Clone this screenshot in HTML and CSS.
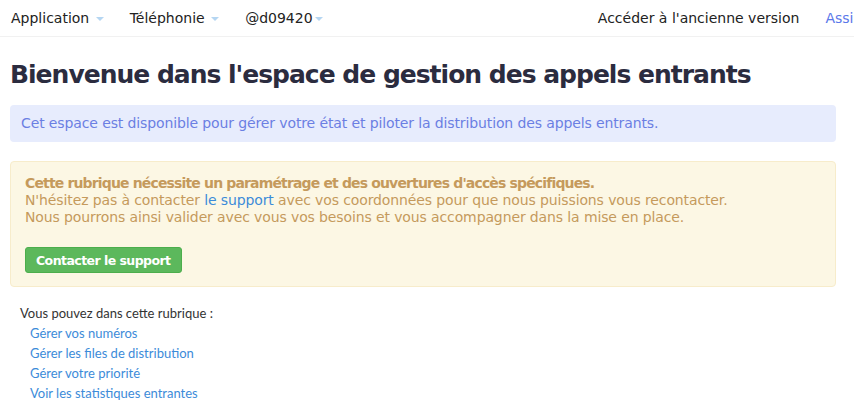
FILE: index.html
```html
<!DOCTYPE html>
<html lang="fr">
  <head>
    <meta charset="UTF-8" />
    <meta name="viewport" content="width=device-width, initial-scale=1.0" />
    <title>Appels entrants</title>
    <link rel="stylesheet" href="styles.css">
  </head>
  <body>
    <nav class="topbar">
      <ul class="menu">
        <li class="dropdown">Application <span class="caret"></span></li>
        <li class="dropdown">Téléphonie <span class="caret"></span></li>
        <li class="dropdown">@d09420<span class="caret"></span></li>
      </ul>
      <ul class="menu menu-right">
        <li>Accéder à l'ancienne version</li>
        <li class="assist">Assistance</li>
      </ul>
    </nav>

    <div class="page">
      <h1 class="page-title">Bienvenue dans l'espace de gestion des appels entrants</h1>

      <div class="alert alert-info">
        Cet espace est disponible pour gérer votre état et piloter la distribution des appels entrants.
      </div>

      <div class="alert alert-warning">
        <strong>Cette rubrique nécessite un paramétrage et des ouvertures d'accès spécifiques.</strong><br>
        N'hésitez pas à contacter <a href="#" class="support-link">le support</a> avec vos coordonnées pour que nous puissions vous recontacter.<br>
        Nous pourrons ainsi valider avec vous vos besoins et vous accompagner dans la mise en place.
        <div class="btn-row">
          <button class="btn-support">Contacter le support</button>
        </div>
      </div>

      <div class="features">
        <p>Vous pouvez dans cette rubrique :</p>
        <ul>
          <li><a href="#">Gérer vos numéros</a></li>
          <li><a href="#">Gérer les files de distribution</a></li>
          <li><a href="#">Gérer votre priorité</a></li>
          <li><a href="#">Voir les statistiques entrantes</a></li>
        </ul>
      </div>
    </div>
  </body>
</html>
```

FILE: styles.css
```css
:root {
  --text-dark: #2b2c3f;
  --caret: #b5d6f2;
  --info-bg: #e7ecfd;
  --info-text: #6b7fe3;
  --warn-bg: #fcf7e4;
  --warn-border: #f7eccb;
  --warn-text: #c59a5c;
  --link: #3c8bd9;
  --green: #5cb85c;
}

body {
  margin: 0;
  background: #fff;
  font-family: "DejaVu Sans", sans-serif;
  color: var(--text-dark);
  overflow: hidden;
}

.topbar {
  display: flex;
  justify-content: space-between;
  height: 36px;
  border-bottom: 1px solid #f1f1f1;
  white-space: nowrap;
}

.menu {
  display: flex;
  align-items: center;
  list-style: none;
  margin: 0;
  padding: 0 0 0 11px;
  gap: 26px;
  font-size: 14px;
  color: #222;
}

.menu-right {
  padding: 0;
  margin-right: -46px;
}

.caret {
  display: inline-block;
  width: 0;
  height: 0;
  margin-left: 2px;
  vertical-align: middle;
  border-top: 4px solid var(--caret);
  border-left: 4px solid transparent;
  border-right: 4px solid transparent;
}

.assist {
  color: #5b78ea;
}

.page {
  padding: 0 18px 0 10px;
}

.page-title {
  margin: 20px 0 12px;
  font-size: 25px;
  font-weight: bold;
  letter-spacing: -1px;
  line-height: 36px;
  white-space: nowrap;
  color: var(--text-dark);
}

.alert {
  border-radius: 4px;
  font-size: 14px;
  letter-spacing: -0.12px;
}

.alert-info {
  background: var(--info-bg);
  color: var(--info-text);
  padding: 9px 11px;
  line-height: 19px;
  margin-bottom: 19px;
}

.alert-warning {
  background: var(--warn-bg);
  border: 1px solid var(--warn-border);
  color: var(--warn-text);
  padding: 13px 14px 13px;
  line-height: 17px;
}

.alert-warning strong {
  letter-spacing: -0.85px;
}

.support-link {
  color: var(--link);
  text-decoration: none;
}

.btn-row {
  margin-top: 21px;
}

.btn-support {
  background: var(--green);
  border: 1px solid #4cae4c;
  border-radius: 3px;
  color: #fff;
  font-family: inherit;
  font-size: 12.5px;
  font-weight: bold;
  letter-spacing: -0.55px;
  height: 26px;
  padding: 0 10px;
}

.features {
  padding: 16px 10px 0;
  font-family: "Lato", sans-serif;
  font-size: 13px;
  color: #333;
}

.features p {
  margin: 0;
  line-height: 20px;
}

.features ul {
  list-style: none;
  margin: 0;
  padding-left: 10px;
}

.features li {
  line-height: 20px;
}

.features a {
  color: var(--link);
  text-decoration: none;
}
```
